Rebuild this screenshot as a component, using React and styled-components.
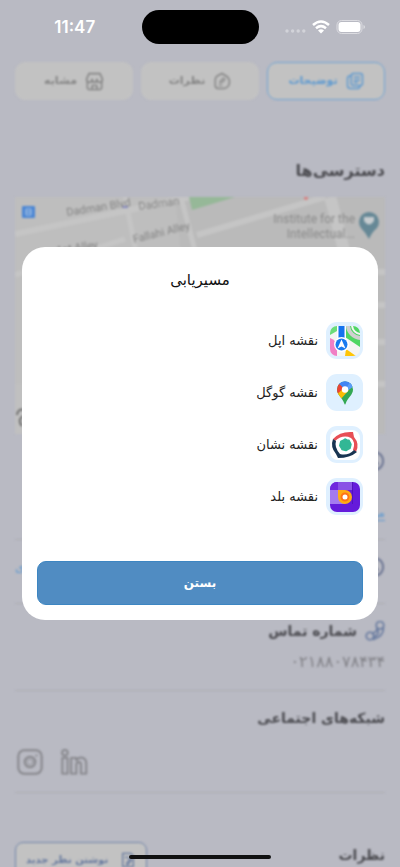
import React from "react";
import styled, { createGlobalStyle, css } from "styled-components";

const GlobalStyle = createGlobalStyle`
  *, *::before, *::after { box-sizing: border-box; }
  body {
    margin: 0;
    background: #b9bac3;
    font-family: "DejaVu Sans", sans-serif;
  }
  button { font-family: inherit; cursor: pointer; }
  h1, h2, p, ul { margin: 0; padding: 0; }
`;

const Screen = styled.div`
  height: 100vh;
  overflow: hidden;
`;

/* Status bar */
const StatusBar = styled.header`
  display: grid;
  grid-template-columns: 1fr 117px 1fr;
  align-items: center;
  height: 54px;
`;

const Clock = styled.time`
  justify-self: center;
  padding-left: 8px;
  font: 600 17px/22px Inter, sans-serif;
  color: #fff;
`;

const Island = styled.div`
  height: 34px;
  border-radius: 17px;
  background: #000;
`;

const StatusIcons = styled.div`
  justify-self: center;
  display: flex;
  align-items: center;
  gap: 6px;
  padding-right: 8px;
  svg { display: block; }
`;

/* Page behind the dialog */
const Page = styled.main`
  direction: rtl;
  padding: 8px 15px 0;
  filter: blur(1px);
`;

const Tabs = styled.nav`
  display: grid;
  grid-template-columns: repeat(3, 1fr);
  gap: 8px;
`;

const Tab = styled.button`
  display: flex;
  align-items: center;
  justify-content: center;
  gap: 8px;
  padding: 8px;
  border: 1px solid #c2c2c2;
  border-radius: 10px;
  background: #c2c2c2;
  color: #858585;
  font-size: 11px;
  font-weight: 700;
  line-height: 20px;
  ${(p) =>
    p.$active &&
    css`
      border-color: #6fa3d2;
      color: #5f9ad0;
    `}
`;

const SectionTitle = styled.h2`
  display: flex;
  align-items: center;
  gap: 8px;
  color: #4b4b50;
  font-size: ${(p) => (p.$large ? 16 : 14)}px;
  font-weight: 700;
  line-height: 26px;
`;

const Access = styled.section`
  padding-top: 58px;
`;

const MapView = styled.div`
  margin-top: 13px;
  svg { display: block; width: 100%; height: 237px; }
`;

const Section = styled.section`
  padding: 14px 0 ${(p) => (p.$compact ? 23 : 16)}px;
  border-bottom: 1px solid #adadb2;
`;

const TextLink = styled.a`
  display: block;
  width: fit-content;
  margin-top: 29px;
  color: #5f9ad0;
  font-size: 13px;
  line-height: 20px;
  text-underline-offset: 3px;
`;

const SplitRow = styled.div`
  display: flex;
  align-items: center;
  justify-content: space-between;
`;

const RowLink = styled.a`
  color: #5f9ad0;
  font-size: 13px;
  line-height: 20px;
  text-decoration: none;
`;

const PhoneNumber = styled.p`
  padding: 8px 0 2px;
  color: #808086;
  font-size: 16px;
  line-height: 20px;
`;

const Socials = styled.div`
  display: flex;
  justify-content: flex-end;
  gap: 16px;
  margin-top: 17px;
  padding-left: 1px;
`;

const SocialLink = styled.a`
  color: #85858a;
  svg { display: block; }
`;

const Reviews = styled.section`
  display: flex;
  align-items: flex-start;
  justify-content: space-between;
  padding-top: 49px;
`;

const ReviewButton = styled.button`
  display: flex;
  align-items: center;
  gap: 12px;
  padding: 7px 10px;
  border: 1px solid #7184a8;
  border-radius: 8px;
  background: #c2c2c2;
  color: #66799e;
  font-size: 10px;
  font-weight: 700;
  line-height: 20px;
  white-space: nowrap;
`;

/* Dialog */
const Overlay = styled.div`
  position: fixed;
  inset: 0;
  display: flex;
  align-items: center;
  justify-content: center;
  padding: 0 22px;
`;

const Dialog = styled.div`
  direction: rtl;
  width: 100%;
  padding: 20px 15px 15px;
  border-radius: 23px;
  background: #fff;
`;

const DialogTitle = styled.h1`
  color: #111;
  font-size: 15px;
  font-weight: 400;
  line-height: 26px;
  text-align: center;
`;

const AppList = styled.ul`
  display: grid;
  gap: 15px;
  margin-top: 29px;
  list-style: none;
`;

const AppButton = styled.button`
  display: flex;
  align-items: center;
  gap: 8px;
  width: 100%;
  padding: 0;
  border: 0;
  background: none;
  color: #222;
  font-size: 13px;
  line-height: 20px;
`;

const AppTile = styled.span`
  display: grid;
  place-items: center;
  width: 37px;
  height: 37px;
  border-radius: 11px;
  background: #dff0ff;
  svg { display: block; }
`;

const CloseButton = styled.button`
  display: block;
  width: 100%;
  margin-top: 46px;
  padding: 11px;
  border: 1px solid #3d86c2;
  border-radius: 9px;
  background: #508cc2;
  color: #fff;
  font-size: 12px;
  font-weight: 700;
  line-height: 20px;
`;

const HomeIndicator = styled.div`
  position: fixed;
  bottom: 8px;
  left: 50%;
  width: 142px;
  height: 4px;
  margin-left: -71px;
  border-radius: 2px;
  background: #111;
`;

const Stroke = ({ size = 18, children, ...rest }) => (
  <svg width={size} height={size} viewBox="0 0 24 24" fill="none" stroke="currentColor" strokeWidth="2" strokeLinecap="round" strokeLinejoin="round" aria-hidden="true" {...rest}>
    {children}
  </svg>
);

const DocumentsIcon = () => (
  <Stroke>
    <path d="M10 2h9q3 0 3 3v10q0 3-3 3h-9q-3 0-3-3V5q0-3 3-3z" />
    <path d="M6 5Q2 5 2 9v9q0 4 4 4h9q3 0 4-3M11 7h7M11 11h7M11 14h4" />
  </Stroke>
);

const CommentIcon = () => (
  <Stroke>
    <path d="M14 22H7q-4 0-4-4V11Q3 6 8 4l4-2 5 3q5 3 5 8t-3 7q-2 2-5 2z" />
    <path d="M9 15l1-3 4-4 2 2-4 4zM8 18h4" strokeWidth="1.500" />
  </Stroke>
);

const ShopIcon = () => (
  <Stroke size={19}>
    <path d="M5 2h14l3 7q0 4-3.500 4T15 9q0 4-3 4T9 9q0 4-3.500 4T2 9z" />
    <path d="M3 13v7q0 2 2 2h14q2 0 2-2v-7M9 22v-5h6v5" />
  </Stroke>
);

const CircleIcon = () => (
  <Stroke size={22} stroke="#66708f">
    <circle cx="12" cy="12" r="10" />
    <path d="M12 6v6l4 3" />
  </Stroke>
);

const PhoneIcon = () => (
  <Stroke size={20} stroke="#66799e">
    <circle cx="18" cy="5" r="4.500" />
    <circle cx="6" cy="18" r="4.500" />
    <path d="M14 8q2 4-5 7M22 8q1 10-12 14M15 11q2 2 0 5t-5 3" />
  </Stroke>
);

const InstagramIcon = () => (
  <Stroke size={28} strokeWidth="1.700">
    <rect x="2" y="2" width="20" height="20" rx="5" />
    <circle cx="12" cy="12" r="4.500" />
    <circle cx="12" cy="12" r="2.500" strokeWidth="0.600" />
    <path d="M17.500 6.500h.1" />
  </Stroke>
);

const LinkedinIcon = () => (
  <Stroke size={28} strokeWidth="1.600">
    <circle cx="4.200" cy="4" r="2.400" />
    <path d="M2 8.500h4.500V22H2zM9.500 8.500H14v2q2-2.500 4.500-2.300 4 .3 4 5.300V22H18v-7.500q0-2.500-2-2.500t-2 2.500V22H9.500z" />
  </Stroke>
);

const StreetMap = () => (
  <svg viewBox="0 0 370 237" preserveAspectRatio="xMidYMid slice" role="img" aria-label="Map" direction="ltr" fontFamily="Roboto, sans-serif">
    <rect width="370" height="237" fill="#bababa" />
    <path d="M0 0H160L185 237H0z" fill="#bebebe" />
    <g fill="none" stroke="#c5c5c5">
      <path d="M0 37L110 14 175 0M182 38L310 0" strokeWidth="6" />
      <path d="M0 78L110 42M166 0L192 100M110 0L122 60" strokeWidth="5" />
      <path d="M315 0Q324 30 335 80" strokeWidth="12" />
      <path d="M350 75H370M350 108H370M350 145H370M350 187H370" strokeWidth="6" />
    </g>
    <path d="M174 0H220L177 13z" fill="#96b898" />
    <rect x="7" y="9" width="13" height="12" rx="1" fill="#4b86d4" />
    <path d="M11 12h5v6h-5zM11 15h5" fill="none" stroke="#b2cae5" />
    <circle cx="291" cy="1" r="2" fill="#d88080" />
    <path d="M107 10h6" stroke="#868ac0" strokeWidth="2" />
    <g fill="#858585" fontSize="11" textAnchor="start">
      <text transform="translate(52 19) rotate(-9)">Dadman Blvd</text>
      <text transform="translate(124 13) rotate(-8)">Dadman</text>
      <text transform="translate(119 46) rotate(-14)">Fallahi Alley</text>
      <text transform="translate(42 57) rotate(-8)">1st Alley</text>
    </g>
    <g fill="#8b8b8b" fontSize="12" textAnchor="end">
      <text x="340" y="26">Institute for the</text>
      <text x="340" y="41">Intellectual...</text>
    </g>
    <path d="M354 42Q350 35 346 31A10 10 0 1 1 362 31Q357 35 354 42z" fill="#668896" />
    <path d="M349 20h10v4q-5 7-10 0z" fill="#c6cccf" />
    <path d="M0 187H30V237H0z" fill="#c0c0c0" />
    <path d="M9 213Q3 211 2 218M8 219q-6 4-1 10" fill="none" stroke="#707070" strokeWidth="2" />
  </svg>
);

const AppleMapsIcon = () => (
  <svg width="30" height="30" viewBox="0 0 30 30" aria-hidden="true">
    <defs>
      <clipPath id="apple-tile"><rect width="30" height="30" rx="7" /></clipPath>
    </defs>
    <g clipPath="url(#apple-tile)">
      <rect width="30" height="30" fill="#f4f5f3" />
      <path d="M0 0H7V5L0 9z" fill="#6bdc79" />
      <path d="M15 0H30V21L15 11z" fill="#4fd663" />
      <path d="M18-1A13 13 0 0 0 31 12" fill="none" stroke="#d0d0d0" strokeWidth="4" />
      <path d="M22-1A9 9 0 0 0 31 8" fill="none" stroke="#f5f5f5" strokeWidth="2" />
      <path d="M0 12Q7 14 7 22V30H0z" fill="#f07fc5" />
      <path d="M16 23L26 30H15z" fill="#ffc507" />
      <path d="M7 0H16V12H7z" fill="#fff" />
      <path d="M8.500 0H14.500V13H8.500z" fill="#1473ee" />
      <circle cx="11.500" cy="18.500" r="7.500" fill="#fff" />
      <circle cx="11.500" cy="18.500" r="6" fill="#197bf0" />
      <path d="M11.500 13.500L15.500 22.500 11.500 20.500 7.500 22.500z" fill="#fff" />
    </g>
  </svg>
);

const GoogleMapsIcon = () => (
  <svg width="18" height="24" viewBox="0 0 18 24" aria-hidden="true">
    <defs>
      <clipPath id="google-pin"><path d="M9 0.500A8 8 0 0 1 17 8.500C17 14 12 16 9.500 23Q9 24 8.500 23C6 16 1 14 1 8.500A8 8 0 0 1 9 0.500z" /></clipPath>
    </defs>
    <g clipPath="url(#google-pin)">
      <rect width="18" height="24" fill="#34a853" />
      <path d="M0 0H18V3L9 9 2 3z" fill="#4285f4" />
      <path d="M-1 14L9 4 13 9 4 19z" fill="#fbbc04" />
      <path d="M2 2L8 7 0 14-1 5z" fill="#ea4335" />
      <path d="M3 2L9 9 17 4 13-1H6z" fill="#4285f4" />
      <path d="M9 9L14 1 18 3V5L10 11z" fill="#5a9df8" />
    </g>
    <circle cx="9" cy="8.500" r="3.200" fill="#fff" />
  </svg>
);

const NeshanIcon = () => (
  <svg width="30" height="30" viewBox="0 0 30 30" aria-hidden="true">
    <rect width="30" height="30" rx="8" fill="#fff" />
    <path d="M3 9Q10 1 23 2L24 7Q30 14 26 22L23 20Q26 12 21 8 13 4 5 11z" fill="#e84f55" />
    <path d="M3 9L6 11Q4 17 10 24 18 26 24 20L27 22Q20 28 8 28L6 24Q0 17 3 9z" fill="#183451" />
    <path d="M15 9l2 1 2 .3 1 2 1 2-.5 2-.5 2-2 1-2 1.200-2-.5-2-.5-1-2-1.200-2 .5-2 .5-2 2-1z" fill="#32b795" stroke="#32b795" strokeWidth="1.500" strokeLinejoin="round" />
  </svg>
);

const BaladIcon = () => (
  <svg width="30" height="30" viewBox="0 0 30 30" aria-hidden="true">
    <defs>
      <clipPath id="balad-tile"><rect width="30" height="30" rx="7" /></clipPath>
    </defs>
    <g clipPath="url(#balad-tile)">
      <rect width="30" height="30" fill="#651bdb" />
      <path d="M0 0H8V8H0z" fill="#7029de" />
      <path d="M8 0H22V8H8z" fill="#8a52e6" />
      <path d="M0 8H15V22H0z" fill="#a47aef" />
      <path d="M22 0H23V22H22z" fill="#5113be" />
      <path d="M8 8H15A7 7 0 1 1 8 15z" fill="#ffac16" />
      <circle cx="15" cy="15" r="3.500" fill="#fff" stroke="#ff7417" strokeWidth="2" />
    </g>
  </svg>
);

const mapApps = [
  { name: "نقشه اپل", Icon: AppleMapsIcon },
  { name: "نقشه گوگل", Icon: GoogleMapsIcon },
  { name: "نقشه نشان", Icon: NeshanIcon },
  { name: "نقشه بلد", Icon: BaladIcon },
];

export default function App() {
  return (
    <Screen lang="fa">
      <GlobalStyle />
      <StatusBar>
        <Clock>11:47</Clock>
        <Island />
        <StatusIcons>
          <svg width="21" height="14" viewBox="0 0 21 14" fill="#d2d3d9" aria-hidden="true">
            <circle cx="2" cy="11" r="1.700" />
            <circle cx="7.600" cy="11" r="1.700" />
            <circle cx="13.200" cy="11" r="1.700" />
            <circle cx="18.800" cy="11" r="1.700" />
          </svg>
          <svg width="18" height="14" viewBox="0 0 18 14" fill="none" stroke="#fff" strokeWidth="2.500" aria-hidden="true">
            <path d="M1 5Q9-2 17 5M4 8.200Q9 4 14 8.200" />
            <path d="M6 10.500Q9 8 12 10.500L9 13.500z" fill="#fff" stroke="none" />
          </svg>
          <svg width="30" height="14" viewBox="0 0 30 14" aria-hidden="true">
            <rect x="1" y="0.500" width="25" height="13" rx="4.500" fill="none" stroke="#dcdce1" />
            <rect x="2.500" y="2" width="22" height="10" rx="3" fill="#fff" />
            <path d="M27.500 5Q29 5.500 29 7T27.500 9z" fill="#dcdce1" />
          </svg>
        </StatusIcons>
      </StatusBar>

      <Page aria-hidden="true">
        <Tabs>
          <Tab $active><DocumentsIcon />توضیحات</Tab>
          <Tab><CommentIcon />نظرات</Tab>
          <Tab><ShopIcon />مشابه</Tab>
        </Tabs>

        <Access>
          <SectionTitle $large>دسترسی‌ها</SectionTitle>
          <MapView><StreetMap /></MapView>
        </Access>

        <Section>
          <SectionTitle><CircleIcon />آدرس</SectionTitle>
          <TextLink href="#route">مسیریابی</TextLink>
        </Section>
        <Section $compact>
          <SplitRow>
            <SectionTitle><CircleIcon />ساعت کاری</SectionTitle>
            <RowLink href="#hours">ساعات کاری</RowLink>
          </SplitRow>
        </Section>
        <Section>
          <SectionTitle><PhoneIcon />شماره تماس</SectionTitle>
          <PhoneNumber>۰۲۱۸۸۰۷۸۴۳۴</PhoneNumber>
        </Section>
        <Section>
          <SectionTitle>شبکه‌های اجتماعی</SectionTitle>
          <Socials>
            <SocialLink href="#linkedin" aria-label="LinkedIn"><LinkedinIcon /></SocialLink>
            <SocialLink href="#instagram" aria-label="Instagram"><InstagramIcon /></SocialLink>
          </Socials>
        </Section>
        <Reviews>
          <SectionTitle>نظرات</SectionTitle>
          <ReviewButton>
            <Stroke size={16}><path d="M4 2h12l4 4v16H4zM8 8h5M15 10l-5 7v2h2l5-7z" /></Stroke>
            نوشتن نظر جدید
          </ReviewButton>
        </Reviews>
      </Page>

      <Overlay>
        <Dialog role="dialog" aria-modal="true" aria-labelledby="route-title">
          <DialogTitle id="route-title">مسیریابی</DialogTitle>
          <AppList>
            {mapApps.map(({ name, Icon }) => (
              <li key={name}>
                <AppButton>
                  <AppTile><Icon /></AppTile>
                  {name}
                </AppButton>
              </li>
            ))}
          </AppList>
          <CloseButton>بستن</CloseButton>
        </Dialog>
      </Overlay>
      <HomeIndicator />
    </Screen>
  );
}
